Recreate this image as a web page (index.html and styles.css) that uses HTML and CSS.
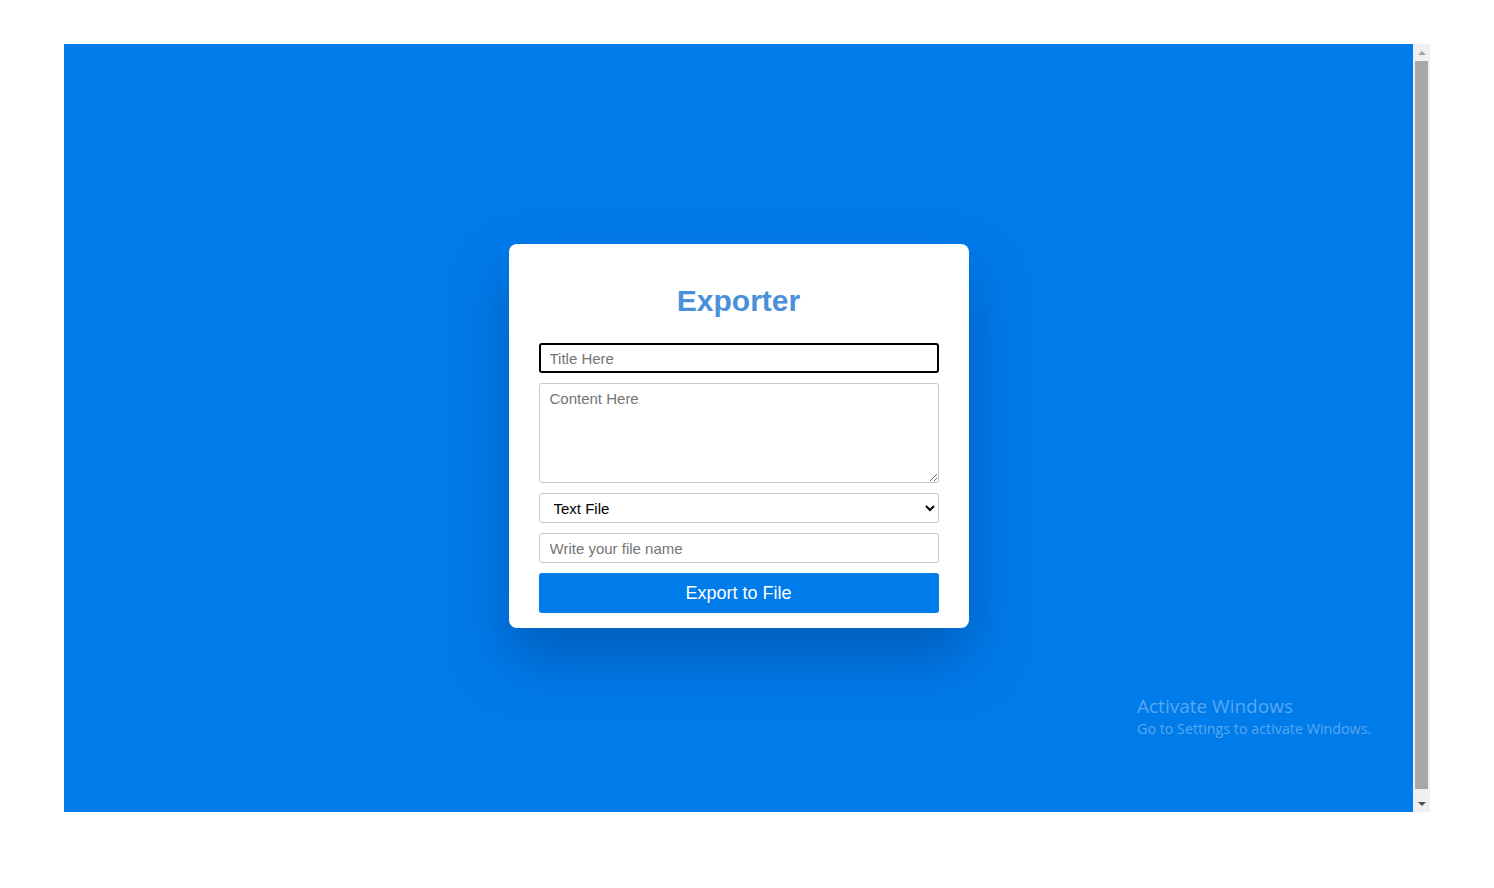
FILE: index.html
```html
<!DOCTYPE html>
<html lang="en">
<head>
  <meta charset="UTF-8">
  <meta name="viewport" content="width=device-width, initial-scale=1.0">
  <title>Exporter</title>
  <link rel="stylesheet" href="styles.css">
</head>
<body>

<div class="screen">
  <div class="viewport">
    <div class="card">
      <h1>Exporter</h1>
      <input type="text" class="field focused" placeholder="Title Here">
      <textarea class="field content" placeholder="Content Here"></textarea>
      <select class="field picker">
        <option>Text File</option>
        <option>JSON File</option>
        <option>CSV File</option>
      </select>
      <input type="text" class="field" placeholder="Write your file name">
      <button class="export">Export to File</button>
    </div>

    <div class="watermark">
      <div class="wm-title">Activate Windows</div>
      <div class="wm-sub">Go to Settings to activate Windows.</div>
    </div>
  </div>

  <div class="scrollbar">
    <div class="arrow up"></div>
    <div class="thumb"></div>
    <div class="arrow down"></div>
  </div>
</div>

</body>
</html>
```

FILE: styles.css
```css
body {
  margin: 0;
  background: #fff;
  font-family: Arial, "Liberation Sans", sans-serif;
}
.screen {
  display: flex;
  width: 1366px;
  height: 768px;
  margin: 44px 0 0 64px;
}
.viewport {
  position: relative;
  flex: 1;
  background: #007bea;
  display: flex;
  justify-content: center;
  align-items: flex-start;
  padding-top: 200px;
  box-sizing: border-box;
}
.card {
  width: 460px;
  box-sizing: border-box;
  background: #fff;
  border-radius: 8px;
  padding: 40px 30px 15px;
  display: flex;
  flex-direction: column;
  gap: 10px;
  box-shadow: 0 30px 60px rgba(0, 40, 100, 0.35);
}
.card > * {
  flex-shrink: 0;
}
.card h1 {
  margin: 0 0 15px;
  text-align: center;
  color: #4a90d9;
  font-size: 30px;
  line-height: 34px;
  font-weight: bold;
}
.field {
  box-sizing: border-box;
  width: 400px;
  height: 30px;
  margin: 0;
  padding: 0 10px;
  border: 1px solid #c8c8c8;
  border-radius: 3px;
  font-family: Arial, "Liberation Sans", sans-serif;
  font-size: 15px;
  color: #000;
  background: #fff;
}
.field::placeholder {
  color: #757575;
}
.focused {
  border: 2px solid #000;
  padding-left: 9px;
  outline: none;
}
.content {
  height: 100px;
  padding-top: 6px;
  resize: vertical;
}
.picker {
  padding-left: 10px;
  font-size: 15px;
}
.export {
  height: 40px;
  border: none;
  border-radius: 3px;
  background: #007bea;
  color: #fff;
  font-family: Arial, "Liberation Sans", sans-serif;
  font-size: 18px;
}
.watermark {
  position: absolute;
  left: 1073px;
  top: 650px;
  color: rgba(255, 255, 255, 0.35);
  font-family: "Open Sans", "Noto Sans", sans-serif;
}
.wm-title {
  font-size: 19px;
  line-height: 24px;
}
.wm-sub {
  font-size: 14.3px;
  line-height: 22px;
}
.scrollbar {
  width: 17px;
  background: #f0f0f0;
  display: flex;
  flex-direction: column;
  align-items: center;
}
.arrow {
  height: 17px;
  width: 17px;
  display: flex;
  align-items: center;
  justify-content: center;
}
.arrow::after {
  content: "";
  border-left: 4px solid transparent;
  border-right: 4px solid transparent;
}
.up::after {
  border-bottom: 4px solid #a3a3a3;
}
.down::after {
  border-top: 4px solid #505050;
}
.thumb {
  flex: 1;
  width: 13px;
  background: #a8a8a8;
  margin: 0 0 6px;
}
```
